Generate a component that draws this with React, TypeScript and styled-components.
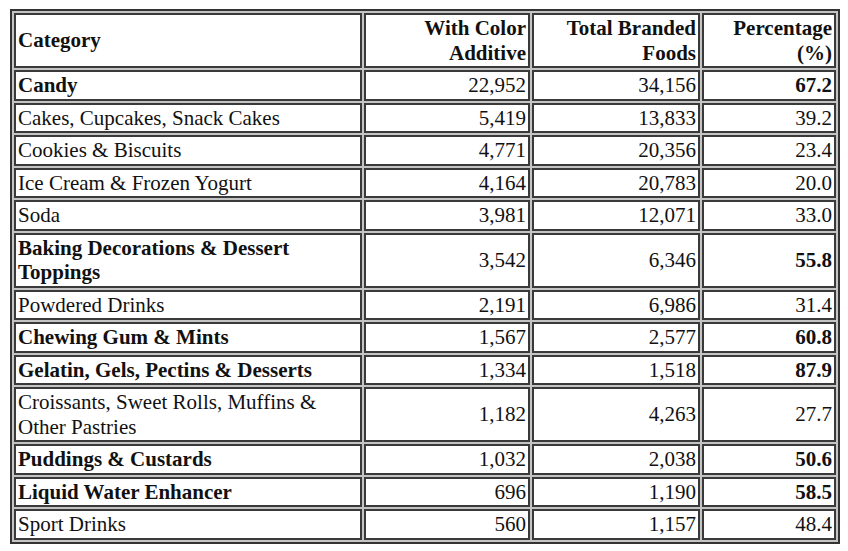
import React from "react";
import styled, { createGlobalStyle } from "styled-components";

const Global = createGlobalStyle`
  html, body {
    margin: 0;
    padding: 0;
    background: #ffffff;
  }
`;

const Page = styled.div`
  padding: 9px 8px 6px 10px;
  font-family: "Liberation Serif", "Times New Roman", serif;
  color: #111;
`;

const Table = styled.table`
  width: 830px;
  table-layout: fixed;
  border-collapse: separate;
  border-spacing: 2px;
  border: 2px solid #333;
  background: #c4c4c4;
  font-size: 21px;
  line-height: 24.5px;
`;

const Col = styled.col<{ $w: number }>`
  width: ${(p) => p.$w}px;
`;

const Cell = styled.td<{ $right?: boolean; $bold?: boolean }>`
  box-sizing: border-box;
  border: 2px solid #3a3a3a;
  background: #fff;
  padding: 1px 2px 1px 2px;
  vertical-align: middle;
  text-align: ${(p) => (p.$right ? "right" : "left")};
  font-weight: ${(p) => (p.$bold ? 700 : 400)};
`;

const HeadCell = styled(Cell).attrs({ as: "th" })`
  font-weight: 700;
`;

type Row = { name: string; a: string; b: string; pct: string; bold?: boolean };

const rows: Row[] = [
  { name: "Candy", a: "22,952", b: "34,156", pct: "67.2", bold: true },
  { name: "Cakes, Cupcakes, Snack Cakes", a: "5,419", b: "13,833", pct: "39.2" },
  { name: "Cookies & Biscuits", a: "4,771", b: "20,356", pct: "23.4" },
  { name: "Ice Cream & Frozen Yogurt", a: "4,164", b: "20,783", pct: "20.0" },
  { name: "Soda", a: "3,981", b: "12,071", pct: "33.0" },
  { name: "Baking Decorations & Dessert Toppings", a: "3,542", b: "6,346", pct: "55.8", bold: true },
  { name: "Powdered Drinks", a: "2,191", b: "6,986", pct: "31.4" },
  { name: "Chewing Gum & Mints", a: "1,567", b: "2,577", pct: "60.8", bold: true },
  { name: "Gelatin, Gels, Pectins & Desserts", a: "1,334", b: "1,518", pct: "87.9", bold: true },
  { name: "Croissants, Sweet Rolls, Muffins & Other Pastries", a: "1,182", b: "4,263", pct: "27.7" },
  { name: "Puddings & Custards", a: "1,032", b: "2,038", pct: "50.6", bold: true },
  { name: "Liquid Water Enhancer", a: "696", b: "1,190", pct: "58.5", bold: true },
  { name: "Sport Drinks", a: "560", b: "1,157", pct: "48.4" },
];

export default function App() {
  return (
    <Page>
      <Global />
      <Table>
        <colgroup>
          <Col $w={348} />
          <Col $w={166} />
          <Col $w={168} />
          <Col $w={134} />
        </colgroup>
        <thead>
          <tr>
            <HeadCell>Category</HeadCell>
            <HeadCell $right>With Color Additive</HeadCell>
            <HeadCell $right>Total Branded Foods</HeadCell>
            <HeadCell $right>Percentage (%)</HeadCell>
          </tr>
        </thead>
        <tbody>
          {rows.map((r) => (
            <tr key={r.name}>
              <Cell $bold={r.bold}>{r.name}</Cell>
              <Cell $right>{r.a}</Cell>
              <Cell $right>{r.b}</Cell>
              <Cell $right $bold={r.bold}>{r.pct}</Cell>
            </tr>
          ))}
        </tbody>
      </Table>
    </Page>
  );
}
